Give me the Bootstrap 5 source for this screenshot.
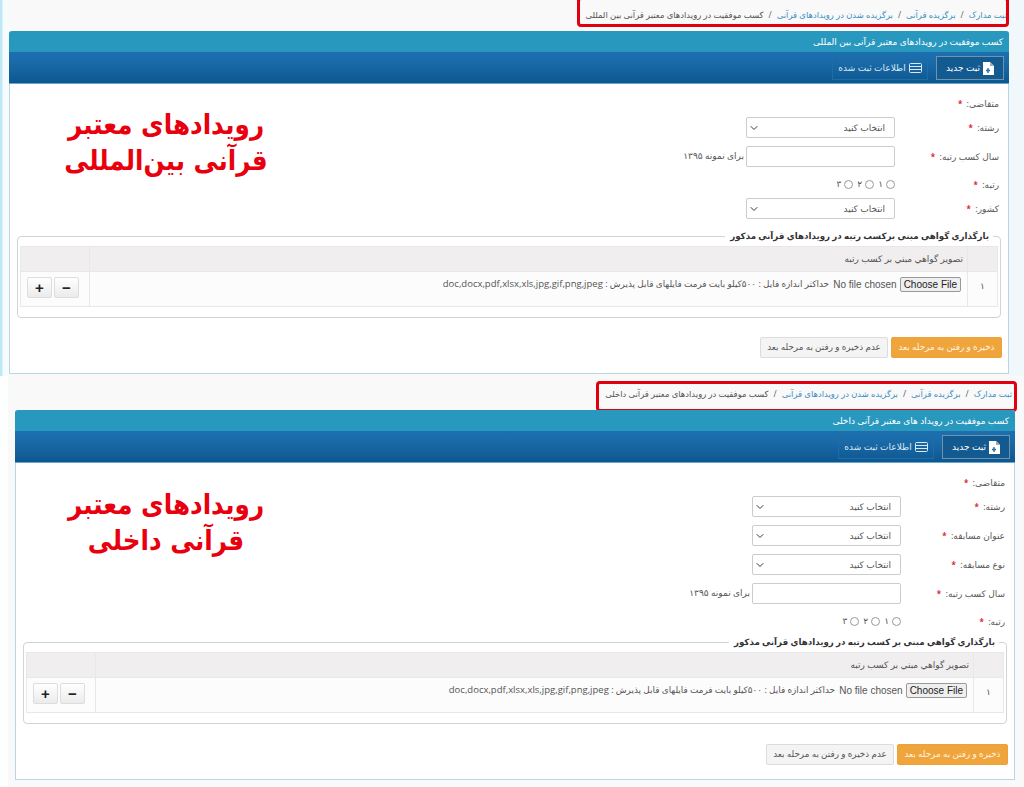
<!DOCTYPE html>
<html lang="fa" dir="rtl">
<head>
<meta charset="utf-8">
<title>ثبت مدارک</title>
<link href="https://cdn.jsdelivr.net/npm/bootstrap@5.3.0/dist/css/bootstrap.min.css" rel="stylesheet">
<style>
html,body{height:787px;overflow:hidden}
body{margin:0;background:#fafdfe;font-family:"Noto Sans","DejaVu Sans",sans-serif;font-size:9px;color:#555;line-height:1.4}
.sect-a{height:376px;padding:0 15px 0 9px;background:linear-gradient(90deg,#bfe8f6 0,#bfe8f6 2px,#f6fbfd 3px,#f6fbfd 9px,#f9f9f9 9px,#f9f9f9 1009px,#f0f8fc 1009px)}
.sect-b{height:411px;padding:4px 9px 0 15px;background:linear-gradient(90deg,#fdfefe 0,#fdfefe 8px,#f9f9f9 8px)}
.crumb-wrap{position:relative;height:31px}
.sect-b .crumb-wrap{height:30px}
.breadcrumb{margin:0;padding:8px 2px 0 0;flex-wrap:nowrap;white-space:nowrap;font-size:8.45px;line-height:14px;overflow:hidden}
.sect-b .breadcrumb{padding:7px 3px 0 0}
.breadcrumb a{color:#3d8fc4;text-decoration:none}
.breadcrumb-item+.breadcrumb-item{padding-left:0;padding-right:5px}
.breadcrumb-item+.breadcrumb-item::before{float:right;padding-right:0;padding-left:5px;color:#666}
.breadcrumb-item.active{color:#555}
.redbox{position:absolute;border:3px solid #e0000f;border-radius:4px;pointer-events:none}
.sect-a .redbox{left:568px;width:432px;top:-3px;height:30px}
.sect-b .redbox{left:581px;width:421px;top:1px;height:31px}
.box-panel{position:relative;background:#fff;border:1px solid #b9d5e6;border-top:0;border-radius:3px 3px 0 0}
.sect-a .box-panel{height:343px}
.sect-b .box-panel{height:370px}
.title-strip{height:21px;background:#2898bf;color:#fff;font-size:9px;line-height:21px;padding-right:6px;margin:0 -1px;border-radius:3px 3px 0 0}
.tab-strip{height:32px;background:linear-gradient(180deg,#1c70b0 0,#1a6aa8 35%,#0d5790 100%);margin:0 -1px;padding:4px 5px 0 0;gap:8px;align-items:flex-start;border-bottom:1px solid #6aa6cb}
.tab-strip .nav-link{display:flex;align-items:center;gap:3px;height:24px;padding:0;font-size:9px;color:#fff;border:1px solid #1f6da6;white-space:nowrap}
.tab-strip .nav-link.active{background:#125a90;border-color:#6f93ad;color:#fff;width:68px;justify-content:center}
.tab-strip .nav-link.idle{width:96px;justify-content:center;color:#dbe8f2}
.form-zone{padding:6px 9px 0 7px}
.field-line{display:flex;align-items:center;height:21px;margin:0 0 8px}
.line-first{height:27px;margin:0}
.line-radio{height:18px;margin:0 0 5px}
.sect-b .line-radio{margin-bottom:0}
.field-label{width:104px;margin:0;text-align:right;font-size:9px;color:#5a5a5a;flex:none;padding-top:2px}
.field-label b{color:#e0242f;font-weight:700;font-size:8px;margin-right:2px}
.form-select.pick,.form-control.pick{width:149px;height:21px;min-height:21px;padding:0 9px 0 0;font-size:9px;color:#555;border-color:#ccc;border-radius:2px;flex:none}
.form-select.pick{background-position:left 3px center;background-size:8px 8px}
.form-control.pick{padding:0 4px}
.hint-text{margin-right:2px}
.radio-set{display:flex;gap:4px;font-size:9px;align-items:center}
.radio-set label{display:flex;align-items:center;gap:3px}
.radio-set .form-check-input{width:9px;height:9px;margin:0;float:none;border-color:#999}
.doc-fieldset{border:1px solid #cdd5da;border-radius:4px;padding:2px 2px 10px;margin:9px -2px 0 0}
.sect-b .doc-fieldset{margin-top:4px}
.doc-fieldset legend{float:none;width:auto;margin:0 5px 0 0;padding:0 4px 0 5px;font-size:8.7px;font-weight:700;color:#333;line-height:16px}
.table.doc-table{margin:0;table-layout:fixed;font-size:9px;color:#555;border-color:#e8e8e8}
.doc-table th{background:#f0eeee;font-weight:400;height:25px;padding:0 4px;vertical-align:middle;color:#555}
.doc-table td{background:#fcfcfc;height:35px;padding:5px 6px;vertical-align:top;border-color:#e8e8e8}
.doc-table .num-col{width:30px;text-align:center;vertical-align:middle;padding-top:0}
.doc-table .act-col{width:69px;padding:5px 6px}
.doc-file{width:131px;font:10px "Liberation Sans",Arial,sans-serif;color:#555;vertical-align:middle}
.doc-file::file-selector-button{font:10px "Liberation Sans",Arial,sans-serif;color:#222;padding:1px 3px;margin:0 0 0 3px;border:1px solid #999;border-radius:2px;background:#efefef}
.doc-note{font-size:8.85px;margin-right:1px}
.doc-note span{font-family:"Open Sans",sans-serif;font-size:9.5px}
.step-btn{width:25px;height:21px;padding:0;font-size:15px;font-weight:700;line-height:18px;color:#222;background:linear-gradient(#fff,#ebebeb);border:1px solid #ddd;border-radius:2px;font-family:"Liberation Sans",sans-serif}
.step-pair{gap:2px}
.foot-row{position:absolute;right:6px;bottom:15px;display:flex;gap:3px}
.sect-b .foot-row{bottom:14px}
.foot-row .btn{height:21px;padding:0;font-size:8.8px;line-height:19px;border-radius:2px}
.btn-go{width:111px;background:#f0a53c;border:1px solid #eca236;color:#fff5e2}
.btn-skip{width:128px;background:#f4f4f4;border:1px solid #dcdcdc;color:#555}
.anno{position:absolute;left:0;width:312px;text-align:center;color:#e8000e;font-weight:700;font-size:28px;line-height:36px;font-family:"DejaVu Sans","Noto Sans",sans-serif;margin:0;transform:scaleX(.88)}
.sect-a .anno{top:76px}
.sect-b .anno{top:77px;width:300px}
</style>
</head>
<body>
<div class="sect-a">
  <div class="crumb-wrap">
    <nav aria-label="breadcrumb"><ol class="breadcrumb">
      <li class="breadcrumb-item"><a href="#">ثبت مدارک</a></li>
      <li class="breadcrumb-item"><a href="#">برگزیده قرآنی</a></li>
      <li class="breadcrumb-item"><a href="#">برگزیده شدن در رویدادهای قرآنی</a></li>
      <li class="breadcrumb-item active">کسب موفقیت در رویدادهای معتبر قرآنی بین المللی</li>
    </ol></nav>
    <div class="redbox"></div>
  </div>
  <div class="box-panel">
    <div class="title-strip">کسب موفقیت در رویدادهای معتبر قرآنی بین المللی</div>
    <ul class="nav tab-strip">
      <li class="nav-item"><a class="nav-link active" href="#"><svg width="11" height="13" viewBox="0 0 11 13"><path d="M0 0h7l4 4v9H0z" fill="#fff"/><path d="M7 0v4h4z" fill="#9ab"/><path d="M5 6v5M3 8.500h4" stroke="#2a6d9e" stroke-width="1.400"/></svg>ثبت جدید</a></li>
      <li class="nav-item"><a class="nav-link idle" href="#"><svg width="13" height="10" viewBox="0 0 13 10" fill="none" stroke="#dbe8f2"><rect x=".5" y=".5" width="12" height="9" rx="1"/><path d="M.5 3.500h12M.5 6.500h12"/></svg>اطلاعات ثبت شده</a></li>
    </ul>
    <p class="anno">رویدادهای معتبر<br>قرآنی بین‌المللی</p>
    <div class="form-zone">
      <div class="field-line line-first"><label class="field-label">متقاضی: <b>*</b></label></div>
      <div class="field-line"><label class="field-label">رشته: <b>*</b></label><select class="form-select pick"><option>انتخاب کنید</option></select></div>
      <div class="field-line"><label class="field-label">سال کسب رتبه: <b>*</b></label><input class="form-control pick" type="text"><span class="hint-text">برای نمونه ۱۳۹۵</span></div>
      <div class="field-line line-radio"><label class="field-label">رتبه: <b>*</b></label><div class="radio-set"><label><input class="form-check-input" type="radio" name="r1">۱</label><label><input class="form-check-input" type="radio" name="r1">۲</label><label><input class="form-check-input" type="radio" name="r1">۳</label></div></div>
      <div class="field-line"><label class="field-label">کشور: <b>*</b></label><select class="form-select pick"><option>انتخاب کنید</option></select></div>
      <fieldset class="doc-fieldset">
        <legend>بارگذاري گواهي مبني برکسب رتبه در رویدادهاي قرآني مذکور</legend>
        <table class="table table-bordered doc-table">
          <thead><tr><th class="num-col"></th><th>تصویر گواهي مبني بر کسب رتبه</th><th class="act-col"></th></tr></thead>
          <tbody><tr><td class="num-col">۱</td><td><input class="doc-file" type="file"><span class="doc-note">حداکثر اندازه فایل : ۵۰۰کیلو بایت فرمت فایلهای قابل پذیرش : <span>doc,docx,pdf,xlsx,xls,jpg,gif,png,jpeg</span></span></td><td class="act-col"><div class="d-flex step-pair flex-row-reverse justify-content-start"><button class="btn step-btn" type="button">+</button><button class="btn step-btn" type="button">−</button></div></td></tr></tbody>
        </table>
      </fieldset>
    </div>
    <div class="foot-row"><button class="btn btn-go" type="button">ذخیره و رفتن به مرحله بعد</button><button class="btn btn-skip" type="button">عدم ذخیره و رفتن به مرحله بعد</button></div>
  </div>
</div>
<div class="sect-b">
  <div class="crumb-wrap">
    <nav aria-label="breadcrumb"><ol class="breadcrumb">
      <li class="breadcrumb-item"><a href="#">ثبت مدارک</a></li>
      <li class="breadcrumb-item"><a href="#">برگزیده قرآنی</a></li>
      <li class="breadcrumb-item"><a href="#">برگزیده شدن در رویدادهای قرآنی</a></li>
      <li class="breadcrumb-item active">کسب موفقیت در رویدادهای معتبر قرآنی داخلی</li>
    </ol></nav>
    <div class="redbox"></div>
  </div>
  <div class="box-panel">
    <div class="title-strip">کسب موفقیت در رویداد های معتبر قرآنی داخلی</div>
    <ul class="nav tab-strip">
      <li class="nav-item"><a class="nav-link active" href="#"><svg width="11" height="13" viewBox="0 0 11 13"><path d="M0 0h7l4 4v9H0z" fill="#fff"/><path d="M7 0v4h4z" fill="#9ab"/><path d="M5 6v5M3 8.500h4" stroke="#2a6d9e" stroke-width="1.400"/></svg>ثبت جدید</a></li>
      <li class="nav-item"><a class="nav-link idle" href="#"><svg width="13" height="10" viewBox="0 0 13 10" fill="none" stroke="#dbe8f2"><rect x=".5" y=".5" width="12" height="9" rx="1"/><path d="M.5 3.500h12M.5 6.500h12"/></svg>اطلاعات ثبت شده</a></li>
    </ul>
    <p class="anno">رویدادهای معتبر<br>قرآنی داخلی</p>
    <div class="form-zone">
      <div class="field-line line-first"><label class="field-label">متقاضی: <b>*</b></label></div>
      <div class="field-line"><label class="field-label">رشته: <b>*</b></label><select class="form-select pick"><option>انتخاب کنید</option></select></div>
      <div class="field-line"><label class="field-label">عنوان مسابقه: <b>*</b></label><select class="form-select pick"><option>انتخاب کنید</option></select></div>
      <div class="field-line"><label class="field-label">نوع مسابقه: <b>*</b></label><select class="form-select pick"><option>انتخاب کنید</option></select></div>
      <div class="field-line"><label class="field-label">سال کسب رتبه: <b>*</b></label><input class="form-control pick" type="text"><span class="hint-text">برای نمونه ۱۳۹۵</span></div>
      <div class="field-line line-radio"><label class="field-label">رتبه: <b>*</b></label><div class="radio-set"><label><input class="form-check-input" type="radio" name="r2">۱</label><label><input class="form-check-input" type="radio" name="r2">۲</label><label><input class="form-check-input" type="radio" name="r2">۳</label></div></div>
      <fieldset class="doc-fieldset">
        <legend>بارگذاري گواهي مبني بر کسب رتبه در رویدادهاي قرآني مذکور</legend>
        <table class="table table-bordered doc-table">
          <thead><tr><th class="num-col"></th><th>تصویر گواهي مبني بر کسب رتبه</th><th class="act-col"></th></tr></thead>
          <tbody><tr><td class="num-col">۱</td><td><input class="doc-file" type="file"><span class="doc-note">حداکثر اندازه فایل : ۵۰۰کیلو بایت فرمت فایلهای قابل پذیرش : <span>doc,docx,pdf,xlsx,xls,jpg,gif,png,jpeg</span></span></td><td class="act-col"><div class="d-flex step-pair flex-row-reverse justify-content-start"><button class="btn step-btn" type="button">+</button><button class="btn step-btn" type="button">−</button></div></td></tr></tbody>
        </table>
      </fieldset>
    </div>
    <div class="foot-row"><button class="btn btn-go" type="button">ذخیره و رفتن به مرحله بعد</button><button class="btn btn-skip" type="button">عدم ذخیره و رفتن به مرحله بعد</button></div>
  </div>
</div>
<script src="https://cdn.jsdelivr.net/npm/bootstrap@5.3.0/dist/js/bootstrap.bundle.min.js"></script>
</body>
</html>
